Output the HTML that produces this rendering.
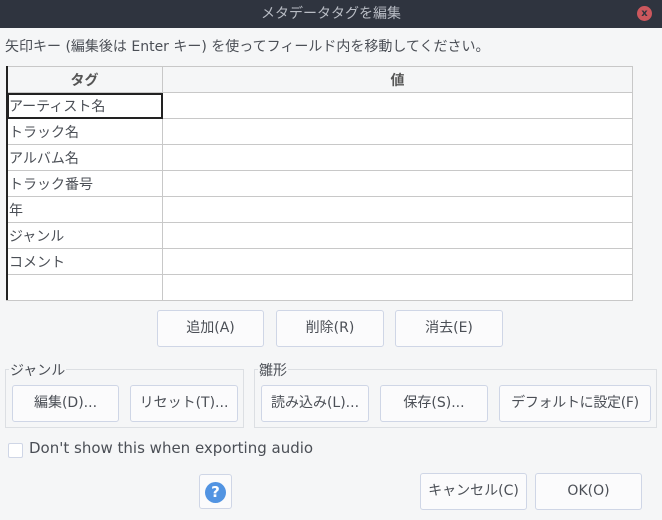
<!DOCTYPE html>
<html><head><meta charset="utf-8"><style>
body{margin:0;width:662px;height:520px;background:#f5f6f7;font-family:"DejaVu Sans","Noto Sans CJK JP",sans-serif;font-size:14px;color:#4b4f56;position:relative;overflow:hidden}
.a{position:absolute}
.title{left:0;top:0;width:662px;height:28px;background:#2f343f;color:#b8bcc4;text-align:center;line-height:28px;font-size:14px}
.close{left:637px;top:6px;width:15px;height:15px;border-radius:50%;background:#cc575d;color:#2f343f;font-size:10px;line-height:15px;text-align:center;font-weight:bold}
.btn{position:absolute;background:#fbfbfc;border:1px solid #cfd6e6;border-radius:3px;box-sizing:border-box;text-align:center;line-height:34px;font-size:14px;color:#4b4f56;white-space:nowrap}
table{border-collapse:collapse;position:absolute;left:6px;top:66px;width:627px;background:#fff}
td,th{border:1px solid #c8c8c8;height:25px;padding:0 2px;font-weight:normal;text-align:left;font-size:14px}
th{background:#f5f6f7;text-align:center;font-weight:bold;color:#555}
.grp{position:absolute;border:1px solid #dcdfe3;box-sizing:border-box}
.lbl{position:absolute;background:#f5f6f7;font-size:14px;padding:0 1px}
</style></head><body>
<div class="a title">メタデータタグを編集</div>
<div class="a close">x</div>
<div class="a" style="left:5px;top:36px;white-space:nowrap">矢印キー (編集後は Enter キー) を使ってフィールド内を移動してください。</div>
<table>
<tr><th style="width:151px">タグ</th><th>値</th></tr>
<tr><td style="outline:2px solid #222;outline-offset:-2px">アーティスト名</td><td></td></tr>
<tr><td>トラック名</td><td></td></tr>
<tr><td>アルバム名</td><td></td></tr>
<tr><td>トラック番号</td><td></td></tr>
<tr><td>年</td><td></td></tr>
<tr><td>ジャンル</td><td></td></tr>
<tr><td>コメント</td><td></td></tr>
<tr><td></td><td></td></tr>
</table>
<div class="a" style="left:6px;top:66px;width:2px;height:234px;background:#222"></div>
<div class="btn" style="left:157px;top:310px;width:107px;height:37px">追加(A)</div>
<div class="btn" style="left:276px;top:310px;width:108px;height:37px">削除(R)</div>
<div class="btn" style="left:395px;top:310px;width:108px;height:37px">消去(E)</div>
<div class="grp" style="left:5px;top:369px;width:239px;height:59px"></div>
<div class="lbl" style="left:9px;top:360px">ジャンル</div>
<div class="grp" style="left:254px;top:369px;width:403px;height:59px"></div>
<div class="lbl" style="left:258px;top:360px">雛形</div>
<div class="btn" style="left:12px;top:385px;width:107px;height:37px">編集(D)...</div>
<div class="btn" style="left:130px;top:385px;width:108px;height:37px">リセット(T)...</div>
<div class="btn" style="left:261px;top:385px;width:108px;height:37px">読み込み(L)...</div>
<div class="btn" style="left:380px;top:385px;width:108px;height:37px">保存(S)...</div>
<div class="btn" style="left:499px;top:385px;width:152px;height:37px;letter-spacing:-0.3px">デフォルトに設定(F)</div>
<div class="a" style="left:8px;top:443px;width:13px;height:13px;border:1px solid #cfd6e6;background:#fff;border-radius:2px"></div>
<div class="a" style="left:29px;top:439px;font-size:15px">Don't show this when exporting audio</div>
<div class="btn" style="left:199px;top:474px;width:33px;height:35px"><div style="position:absolute;left:5px;top:7px;width:21px;height:21px;border-radius:50%;background:#5294e2;color:#fff;font-weight:bold;line-height:21px;font-size:15px">?</div></div>
<div class="btn" style="left:420px;top:473px;width:107px;height:37px">キャンセル(C)</div>
<div class="btn" style="left:535px;top:473px;width:107px;height:37px">OK(O)</div>
</body></html>
